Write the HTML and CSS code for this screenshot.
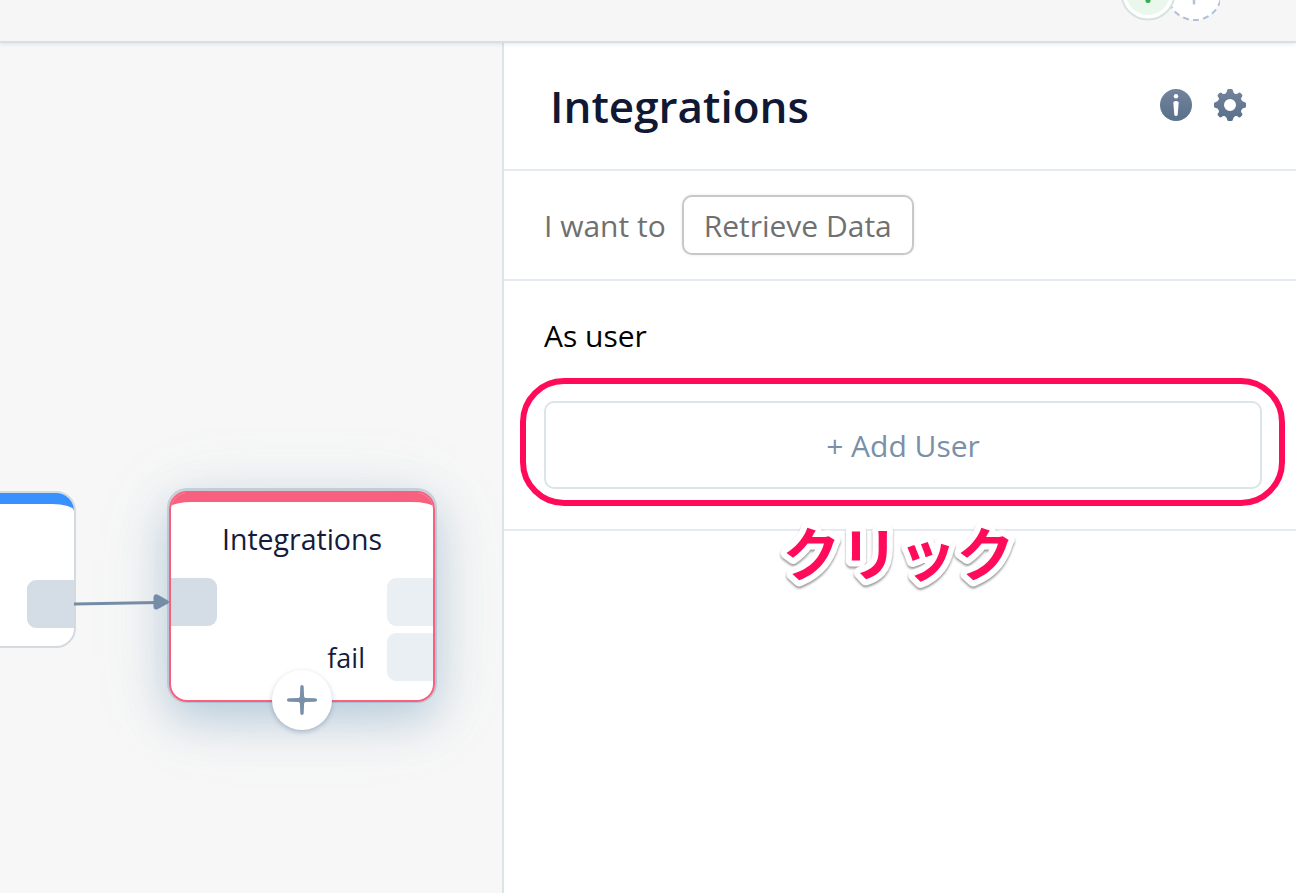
FILE: index.html
```html
<!DOCTYPE html>
<html lang="en">
<head>
<meta charset="utf-8">
<title>Integrations</title>
<link rel="stylesheet" href="styles.css">
</head>
<body>
<div class="app">
  <header class="topbar">
    <svg class="avatars" width="110" height="22" viewBox="0 0 110 22">
      <circle cx="84.500" cy="-7" r="27" fill="#fff" stroke="#b0c1d7" stroke-width="2" stroke-dasharray="6 4.200" stroke-dashoffset="3"/>
      <path d="M84 -8V4.500" stroke="#b3c3d8" stroke-width="2.500"/>
      <circle cx="38" cy="-7" r="26.500" fill="#fff" stroke="#d5e4df" stroke-width="2"/>
      <circle cx="38" cy="-7" r="22" fill="#e9f7ec"/>
      <path d="M38 -8V.5" stroke="#32ad50" stroke-width="5" stroke-linecap="round"/>
    </svg>
  </header>
  <div class="workspace">
    <main class="canvas">
      <section class="node">
        <div class="cap"></div>
        <span class="port port-out"></span>
      </section>
      <section class="node-target">
        <div class="node-body">
          <div class="cap"></div>
          <h2 class="node-title">Integrations</h2>
          <div class="ports">
            <span class="port port-in"></span>
            <span class="port port-light"></span>
          </div>
          <div class="ports ports-fail">
            <span class="port-label">fail</span>
            <span class="port port-light"></span>
          </div>
        </div>
        <button class="add-port" aria-label="Add">
          <svg width="32" height="32" viewBox="0 0 32 32"><path d="M16 1c1 0 1.700.7 1.700 2l.4 9.500a2 2 0 0 0 1.500 1.500l9.400.3c1.300 0 2 .7 2 1.700s-.7 1.700-2 1.700l-9.400.4a2 2 0 0 0-1.500 1.500L17.700 29c0 1.300-.7 2-1.700 2s-1.700-.7-1.700-2l-.4-9.400a2 2 0 0 0-1.500-1.500L3 17.700c-1.300 0-2-.7-2-1.700s.7-1.700 2-1.700l9.400-.3a2 2 0 0 0 1.500-1.500L14.300 3c0-1.300.7-2 1.700-2z" fill="#7a90a8"/></svg>
        </button>
      </section>
      <svg class="edge" width="98" height="20" viewBox="0 0 98 20">
        <path d="M0 12L84 10.400" stroke="#748ca5" stroke-width="3"/>
        <path d="M79.500 5Q80 1.500 83.500 2.600L94 8.400Q96 10 94 11.400L83.500 17.200Q80 18.400 79.500 15Z" fill="#748ca5"/>
      </svg>
    </main>
    <aside class="panel">
      <div class="panel-head">
        <h1 class="title">Integrations</h1>
        <svg class="icon" width="32" height="32" viewBox="0 0 32 32">
          <defs><linearGradient id="slate" gradientUnits="userSpaceOnUse" x1="0" y1="0" x2="0" y2="32"><stop offset="0" stop-color="#73849c"/><stop offset="1" stop-color="#596f8a"/></linearGradient></defs>
          <circle cx="16" cy="16" r="16" fill="url(#slate)"/>
          <circle cx="16" cy="7.200" r="2.200" fill="#fff"/>
          <path d="M13.300 13.200Q16 10.600 18.700 13.200L17.700 25.400Q17.500 27 16 27T14.300 25.400Z" fill="#fff"/>
        </svg>
        <svg class="icon" width="32" height="32" viewBox="0 0 32 32">
          <path fill="url(#slate)" fill-rule="evenodd" d="M13.200 1.200Q13.400 0 14.600 0H17.400Q18.600 0 18.800 1.200Q19.100 3.900 21.400 4.900Q23.400 5.300 24.600 3.800Q25.700 3.200 26.600 4L28 5.400Q28.800 6.400 28.200 7.400Q26.600 8.900 27.100 10.600Q28.100 12.900 30.800 13.200Q32 13.400 32 14.600V17.400Q32 18.600 30.800 18.800Q28.100 19.100 27.100 21.400Q26.600 23.100 28.200 24.600Q28.800 25.600 28 26.600L26.600 28Q25.700 28.800 24.600 28.200Q23.400 26.700 21.400 27.100Q19.100 28.100 18.800 30.800Q18.600 32 17.400 32H14.600Q13.400 32 13.200 30.800Q12.900 28.100 10.600 27.100Q8.600 26.700 7.400 28.200Q6.300 28.800 5.400 28L4 26.600Q3.200 25.600 3.800 24.600Q5.400 23.100 4.900 21.400Q3.900 19.100 1.200 18.800Q0 18.600 0 17.400V14.600Q0 13.400 1.200 13.200Q3.900 12.900 4.900 10.600Q5.400 8.900 3.800 7.400Q3.200 6.400 4 5.400L5.400 4Q6.300 3.200 7.400 3.800Q8.600 5.300 10.600 4.900Q12.900 3.900 13.200 1.200ZM16 10a6 6 0 1 0 0 12a6 6 0 1 0 0-12Z"/>
        </svg>
      </div>
      <div class="action-row">
        <span class="lead">I want to</span>
        <button class="action">Retrieve Data</button>
      </div>
      <div class="user-section">
        <div class="label">As user</div>
        <div class="user-field">
          <button class="add-user">+ Add User</button>
          <div class="highlight"></div>
          <svg class="callout" width="260" height="84" lang="ja"><text x="14.500" y="64">クリック</text></svg>
        </div>
      </div>
    </aside>
  </div>
</div>
</body>
</html>
```
FILE: styles.css
```css
* { box-sizing: border-box; }
body { margin: 0; font-family: "Open Sans", "Noto Sans", sans-serif; }
button { font-family: inherit; }
h1, h2 { margin: 0; }
.app { height: 893px; display: flex; flex-direction: column; overflow: hidden; }
.topbar {
  height: 43px; flex: none; position: relative; z-index: 2;
  display: flex; justify-content: flex-end; padding-right: 76px;
  background: #f6f6f6; border-bottom: 2px solid #d8dfe6;
  box-shadow: 0 1px 4px rgba(100, 120, 140, .18);
}
.workspace { flex: 1; display: flex; min-height: 0; }
.canvas { position: relative; width: 502px; flex: none; background: #f7f7f7; overflow: hidden; }
.node {
  position: absolute; left: -190px; top: 448px; width: 266px; height: 157px;
  background: #fff; border: 2px solid #d5dadf; border-radius: 20px; overflow: hidden;
}
.cap { height: 24px; background: #f7607f; position: relative; overflow: hidden; }
.cap::after {
  content: ""; position: absolute; left: 0; right: 0; top: 9px; height: 40px;
  background: #fff; border-radius: 22px / 5px;
}
.node .cap { height: 28px; background: #3891ff; }
.node .cap::after { top: 11px; border-radius: 22px / 7px; }
.port { display: block; width: 46px; height: 48px; background: #d4dce6; }
.port-out { width: 47px; margin: 59px 0 0 auto; border-radius: 9px 0 0 9px; }
.node-target {
  position: absolute; left: 169px; top: 448px; width: 266px; height: 211px; border-radius: 18px;
  box-shadow: 0 -1px 0 2px rgba(135, 155, 177, .36), 0 16px 44px rgba(115, 158, 190, .42), 0 10px 80px rgba(110, 150, 170, .15);
}
.node-body {
  height: 211px; border: 2px solid #f7607f; border-radius: 18px; background: #fff; overflow: hidden;
}
.node-title { font-size: 28.500px; font-weight: 400; line-height: 38px; color: #141b3c; text-align: center; margin-top: 3px; }
.ports { display: flex; justify-content: space-between; align-items: center; margin-top: 20px; }
.ports-fail { justify-content: flex-end; gap: 22px; margin-top: 7px; }
.port-in { border-radius: 0 9px 9px 0; }
.port-light { background: #e9eff3; border-radius: 9px 0 0 9px; }
.port-label { padding-top: 2px; font-size: 27px; line-height: 38px; color: #141b3c; }
.add-port {
  position: absolute; left: 103px; bottom: -28px; width: 60px; height: 60px; padding: 0; border: 0; border-radius: 50%;
  background: #fff; box-shadow: 0 2px 5px rgba(70, 95, 135, .35); display: flex; align-items: center; justify-content: center;
}
.edge { position: absolute; left: 74px; top: 549px; }
.panel { flex: 1; background: #fff; border-left: 2px solid #dbe5e8; }
.panel-head { height: 128px; display: flex; align-items: center; gap: 22px; padding: 0 50px 2px 46px; border-bottom: 2px solid #e4e9f2; }
.title { margin-right: auto; padding-top: 2px; font-size: 44px; line-height: 60px; font-weight: 600; color: #101833; }
.action-row { height: 110px; display: flex; align-items: center; gap: 16px; padding-left: 40px; border-bottom: 2px solid #e4e9f2; font-size: 30px; color: #707070; }
.action { height: 60px; width: 232px; padding: 0; border: 2px solid #c6c8ca; border-radius: 10px; background: #fff; color: inherit; font-size: 30px; box-shadow: 0 0 3px rgba(130, 150, 170, .2); }
.user-section { height: 250px; padding: 34px 34px 0 40px; border-bottom: 2px solid #e4e9f2; }
.label { font-size: 30px; line-height: 41px; color: #000; }
.user-field { position: relative; margin-top: 45px; }
.add-user { display: block; width: 100%; height: 88px; border: 2px solid #dbe5e7; border-radius: 10px; background: #fff; color: #7a90a8; font-size: 30px; }
.highlight { position: absolute; left: -24px; right: -23px; top: -23px; height: 128px; border: 6px solid #ff0b59; border-radius: 44px; }
.callout { position: absolute; left: 224px; top: 111px; overflow: visible; filter: drop-shadow(0 2px 1px rgba(0, 0, 0, .4)); }
.callout text {
  font: 700 58px "Noto Sans CJK JP", sans-serif; fill: #ff0b59;
  stroke: #fff; stroke-width: 12px; stroke-linejoin: round; paint-order: stroke fill;
}
```
